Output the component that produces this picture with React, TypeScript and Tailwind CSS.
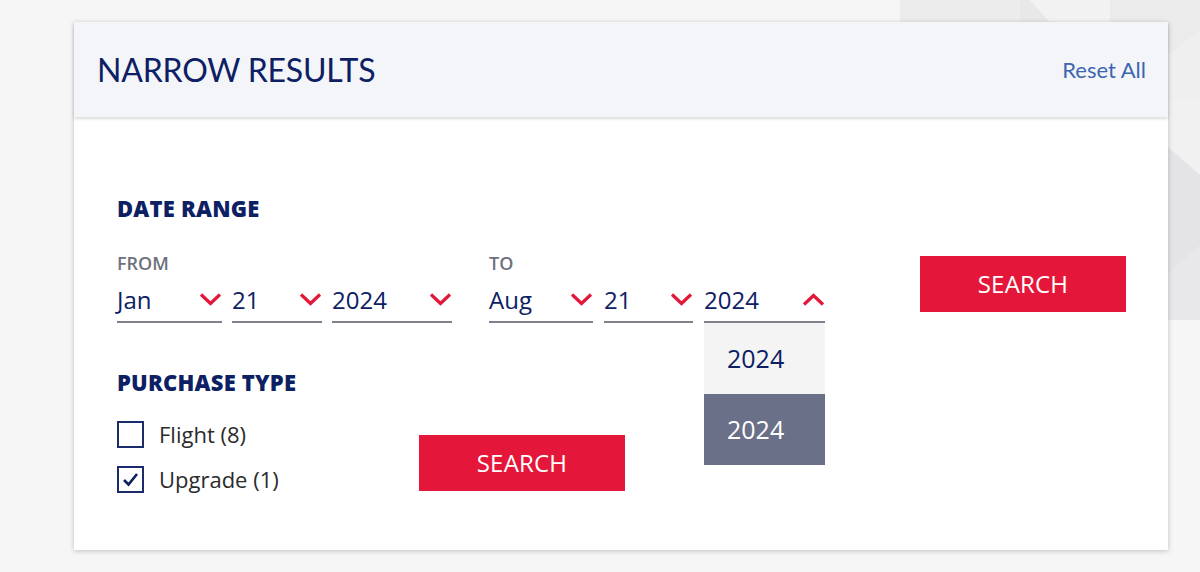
import { useState } from 'react';

const NAVY = 'text-[#0c2063]';

function Chevron({ up = false }: { up?: boolean }) {
  return (
    <svg width="23" height="13" viewBox="0 0 23 13" className="shrink-0 mb-[6px]">
      <path
        d={up ? 'M2 11.5 L11.5 2.5 L21 11.5' : 'M2 1.5 L11.5 10.5 L21 1.5'}
        fill="none"
        stroke="#e3173a"
        strokeWidth="3.2"
      />
    </svg>
  );
}

function Select({ value, width, open = false }: { value: string; width: string; open?: boolean }) {
  return (
    <div className={`relative ${width}`}>
      <div className="flex items-end justify-between h-[51px] pb-[9px] border-b-2 border-[#7f828e]">
        <span className={`text-[24px] leading-none ${NAVY} font-['Open_Sans',sans-serif]`}>{value}</span>
        <Chevron up={open} />
      </div>
      {open && (
        <ul className="absolute left-0 top-full w-full z-10 font-['Open_Sans',sans-serif]">
          <li className={`h-[71px] flex items-center pl-[23px] bg-[#f4f4f5] text-[25px] ${NAVY}`}>2024</li>
          <li className="h-[71px] flex items-center pl-[23px] bg-[#6b7089] text-[25px] text-white">2024</li>
        </ul>
      )}
    </div>
  );
}

function Checkbox({ label, checked }: { label: string; checked?: boolean }) {
  const [on, setOn] = useState(!!checked);
  return (
    <label className="flex items-center gap-[15px] cursor-pointer h-[27px]" onClick={() => setOn(!on)}>
      <span className="w-[27px] h-[27px] border-2 border-[#1c2b6b] flex items-center justify-center bg-white shrink-0">
        {on && (
          <svg width="17" height="15" viewBox="0 0 17 15">
            <path d="M2 8 L6.5 12.5 L15 2" fill="none" stroke="#0c2063" strokeWidth="2.6" />
          </svg>
        )}
      </span>
      <span className="text-[22px] text-[#2b2b2b] font-['Open_Sans',sans-serif] whitespace-nowrap">{label}</span>
    </label>
  );
}

function SearchButton() {
  return (
    <button
      type="button"
      className="w-[206px] h-[56px] bg-[#e4173a] text-white text-[24px] font-['Open_Sans',sans-serif] tracking-[0.2px]"
    >
      SEARCH
    </button>
  );
}

const LABEL = "text-[18px] font-semibold text-[#6d717c] font-['Open_Sans',sans-serif] leading-none";
const HEADING = `text-[22px] font-extrabold tracking-[0.2px] ${NAVY} font-['Open_Sans',sans-serif] leading-none`;

export default function App() {
  return (
    <div className="relative w-[1200px] h-[572px] overflow-hidden bg-[#f6f6f6]">
      {/* decorative background shapes */}
      <svg className="absolute inset-0" width="1200" height="572">
        <polygon points="900,0 1020,0 1020,22 900,22" fill="#ececed" />
        <polygon points="1020,0 1030,0 1050,22 1020,22" fill="#e8e8e9" />
        <polygon points="1030,0 1110,0 1110,22 1050,22" fill="#f2f2f3" />
        <polygon points="1110,0 1200,0 1200,22 1110,22" fill="#ebebec" />
        <polygon points="1160,0 1200,0 1200,100 1160,100" fill="#ebebec" />
        <polygon points="1160,60 1200,30 1200,100 1160,100" fill="#efeff0" />
        <polygon points="1160,100 1200,100 1200,175 1160,175" fill="#f1f1f2" />
        <polygon points="1160,140 1200,175 1200,320 1160,320" fill="#e4e4e6" />
        <polygon points="1160,280 1200,245 1200,320 1160,320" fill="#e8e8ea" />
      </svg>

      <div className="relative pt-[22px] pl-[74px]">
        <div className="w-[1094px] h-[528px] bg-white shadow-[0_1px_5px_rgba(0,0,0,0.22)] flex flex-col">
          <header className="h-[95px] shrink-0 bg-[#f4f5f9] flex items-center justify-between pl-[23px] pr-[22px] shadow-[0_2px_3px_rgba(0,0,0,0.14)] relative z-[1]">
            <h2 className={`text-[32px] ${NAVY} font-['Lato',sans-serif] font-normal tracking-[-0.2px] leading-none`}>
              NARROW RESULTS
            </h2>
            <a className="text-[22px] text-[#3c66b0] font-['Lato',sans-serif] leading-none">Reset All</a>
          </header>

          <div className="pl-[43px] pt-[80px] flex">
            <div className="flex flex-col">
              <h3 className={HEADING}>DATE RANGE</h3>
              <div className="flex mt-[35px] gap-[37px]">
                <div>
                  <div className={LABEL}>FROM</div>
                  <div className="flex gap-[10px]">
                    <Select value="Jan" width="w-[105px]" />
                    <Select value="21" width="w-[90px]" />
                    <Select value="2024" width="w-[120px]" />
                  </div>
                </div>
                <div>
                  <div className={LABEL}>TO</div>
                  <div className="flex gap-[11px]">
                    <Select value="Aug" width="w-[104px]" />
                    <Select value="21" width="w-[89px]" />
                    <Select value="2024" width="w-[121px]" open />
                  </div>
                </div>
              </div>

              <h3 className={`mt-[48px] ${HEADING}`}>PURCHASE TYPE</h3>
              <div className="flex items-start mt-[28px]">
                <div className="w-[302px] flex flex-col gap-[18px]">
                  <Checkbox label="Flight (8)" />
                  <Checkbox label="Upgrade (1)" checked />
                </div>
                <div className="mt-[14px]">
                  <SearchButton />
                </div>
              </div>
            </div>

            <div className="ml-[95px] mt-[59px]">
              <SearchButton />
            </div>
          </div>
        </div>
      </div>
    </div>
  );
}
